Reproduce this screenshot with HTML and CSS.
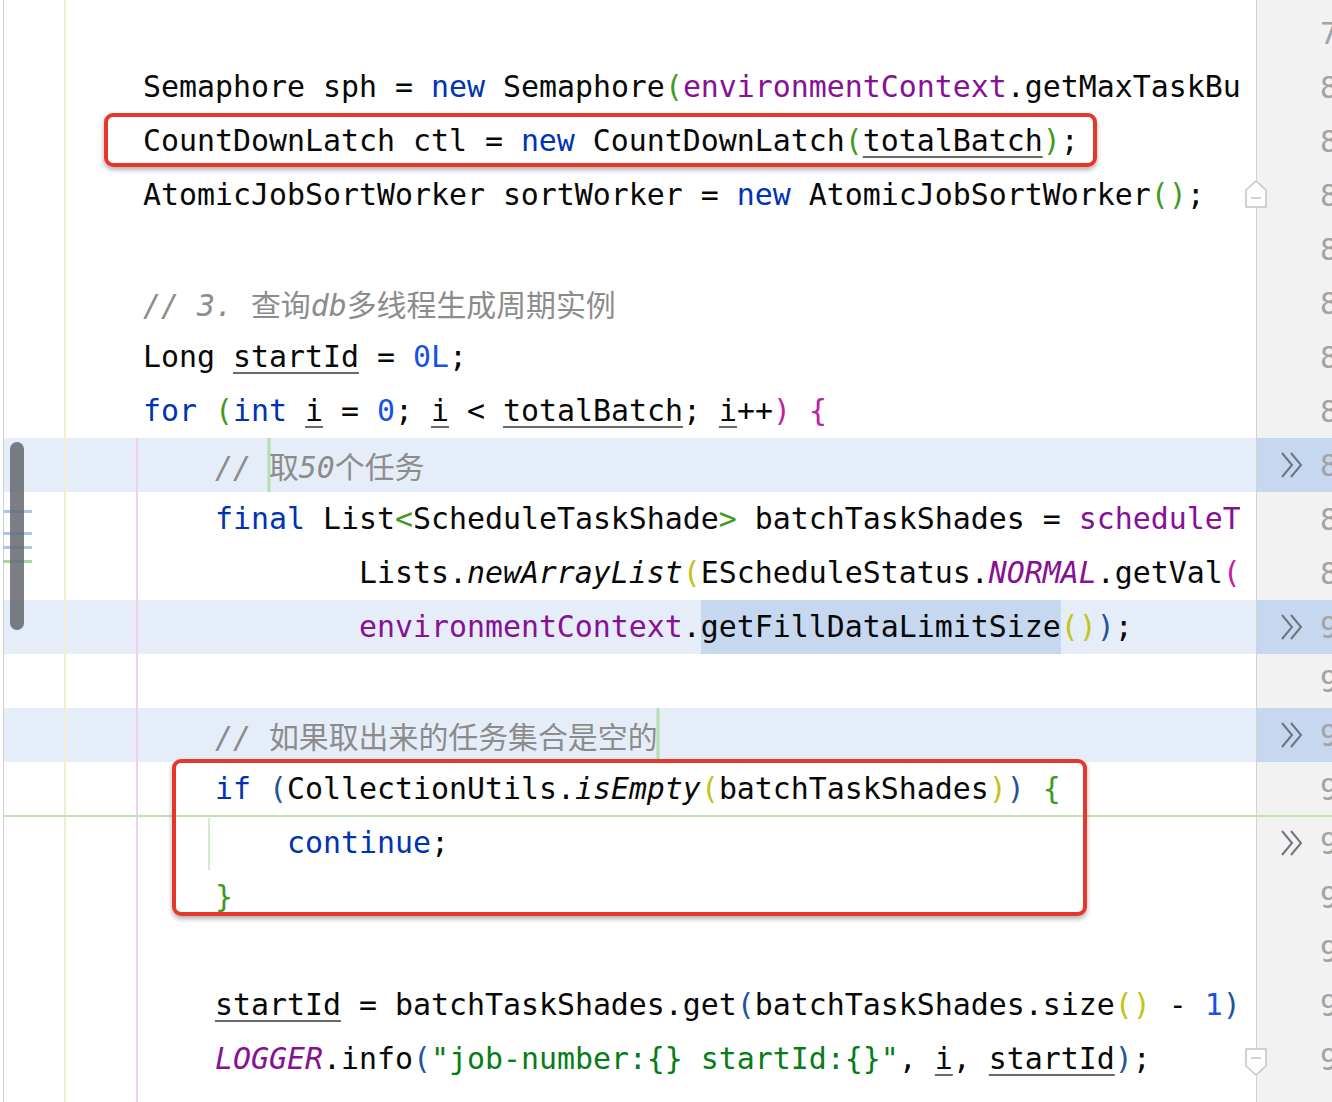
FILE: index.html
```html
<!DOCTYPE html>
<html lang="zh-CN">
<head>
<meta charset="utf-8">
<title>Editor</title>
<link rel="stylesheet" href="styles.css">
</head>
<body>
<div class="editor">
  <div class="code">
    <div class="line"><div class="txt"> </div></div>
    <div class="line"><div class="txt">        Semaphore sph = <span class="kw">new</span> Semaphore<span class="g">(</span><span class="fld">environmentContext</span>.getMaxTaskBuildThread<span class="y">()</span><span class="g">)</span>;</div></div>
    <div class="line"><div class="txt">        CountDownLatch ctl = <span class="kw">new</span> CountDownLatch<span class="g">(</span><span class="u">totalBatch</span><span class="g">)</span>;</div></div>
    <div class="line"><div class="txt">        AtomicJobSortWorker sortWorker = <span class="kw">new</span> AtomicJobSortWorker<span class="g">()</span>;</div></div>
    <div class="line"><div class="txt"> </div></div>
    <div class="line"><div class="txt">        <span class="cm">// 3. <span class="cjk">查询</span>db<span class="cjk">多线程生成周期实例</span></span></div></div>
    <div class="line"><div class="txt">        Long <span class="u">startId</span> = <span class="num">0L</span>;</div></div>
    <div class="line"><div class="txt">        <span class="kw">for</span> <span class="g">(</span><span class="kw">int</span> <span class="u">i</span> = <span class="num">0</span>; <span class="u">i</span> &lt; <span class="u">totalBatch</span>; <span class="u">i</span>++<span class="m">)</span> <span class="m">{</span></div></div>
    <div class="line hl"><div class="txt">            <span class="cm">// <span class="caret"></span><span class="cjk">取</span>50<span class="cjk">个任务</span></span></div></div>
    <div class="line"><div class="txt">            <span class="kw">final</span> List<span class="g">&lt;</span>ScheduleTaskShade<span class="g">&gt;</span> batchTaskShades = <span class="fld">scheduleTaskShadeService</span>.listRunnableTask<span class="m">(</span><span class="u">startId</span>,</div></div>
    <div class="line"><div class="txt">                    Lists.<span class="it">newArrayList</span><span class="y">(</span>EScheduleStatus.<span class="fld it">NORMAL</span>.getVal<span class="m">()</span>, EScheduleStatus.<span class="fld it">FREEZE</span>.getVal<span class="m">()</span><span class="y">)</span>,</div></div>
    <div class="line hl"><div class="txt">                    <span class="fld">environmentContext</span>.<span class="sel">getFillDataLimitSize</span><span class="y">()</span><span class="b">)</span>;</div></div>
    <div class="line"><div class="txt"> </div></div>
    <div class="line hl"><div class="txt">            <span class="cm">// <span class="cjk">如果取出来的任务集合是空的</span></span><span class="caret"></span></div></div>
    <div class="line"><div class="txt">            <span class="kw">if</span> <span class="b">(</span>CollectionUtils.<span class="it">isEmpty</span><span class="y">(</span>batchTaskShades<span class="y">)</span><span class="b">)</span> <span class="g">{</span></div></div>
    <div class="line"><div class="txt">                <span class="kw">continue</span>;</div></div>
    <div class="line"><div class="txt">            <span class="g">}</span></div></div>
    <div class="line"><div class="txt"> </div></div>
    <div class="line"><div class="txt">            <span class="u">startId</span> = batchTaskShades.get<span class="b">(</span>batchTaskShades.size<span class="y">()</span> - <span class="num">1</span><span class="b">)</span>.getId();</div></div>
    <div class="line"><div class="txt">            <span class="fld it">LOGGER</span>.info<span class="b">(</span><span class="str">"job-number:{} startId:{}"</span>, <span class="u">i</span>, <span class="u">startId</span><span class="b">)</span>;</div></div>
    <div class="line"><div class="txt"> </div></div>
  </div>
  <div class="gutter">
    <div class="gl"><span class="chev"></span><span class="ln">79</span></div>
    <div class="gl"><span class="chev"></span><span class="ln">80</span></div>
    <div class="gl"><span class="chev"></span><span class="ln">81</span></div>
    <div class="gl"><span class="chev"></span><span class="ln">82</span></div>
    <div class="gl"><span class="chev"></span><span class="ln">83</span></div>
    <div class="gl"><span class="chev"></span><span class="ln">84</span></div>
    <div class="gl"><span class="chev"></span><span class="ln">85</span></div>
    <div class="gl"><span class="chev"></span><span class="ln">86</span></div>
    <div class="gl hl"><span class="chev"><svg viewBox="0 0 26 28" width="26" height="28"><path d="M3 2 L13 14 L3 26 M12 2 L22 14 L12 26" fill="none" stroke="#6f737a" stroke-width="2"/></svg></span><span class="ln">87</span></div>
    <div class="gl"><span class="chev"></span><span class="ln">88</span></div>
    <div class="gl"><span class="chev"></span><span class="ln">89</span></div>
    <div class="gl hl"><span class="chev"><svg viewBox="0 0 26 28" width="26" height="28"><path d="M3 2 L13 14 L3 26 M12 2 L22 14 L12 26" fill="none" stroke="#6f737a" stroke-width="2"/></svg></span><span class="ln">90</span></div>
    <div class="gl"><span class="chev"></span><span class="ln">91</span></div>
    <div class="gl hl"><span class="chev"><svg viewBox="0 0 26 28" width="26" height="28"><path d="M3 2 L13 14 L3 26 M12 2 L22 14 L12 26" fill="none" stroke="#6f737a" stroke-width="2"/></svg></span><span class="ln">92</span></div>
    <div class="gl"><span class="chev"></span><span class="ln">93</span></div>
    <div class="gl"><span class="chev"><svg viewBox="0 0 26 28" width="26" height="28"><path d="M3 2 L13 14 L3 26 M12 2 L22 14 L12 26" fill="none" stroke="#6f737a" stroke-width="2"/></svg></span><span class="ln">94</span></div>
    <div class="gl"><span class="chev"></span><span class="ln">95</span></div>
    <div class="gl"><span class="chev"></span><span class="ln">96</span></div>
    <div class="gl"><span class="chev"></span><span class="ln">97</span></div>
    <div class="gl"><span class="chev"></span><span class="ln">98</span></div>
    <div class="gl"><span class="chev"></span><span class="ln">99</span></div>
  </div>
</div>

<div class="guide guide-method"></div>
<div class="guide guide-for"></div>
<div class="guide guide-if"></div>
<div class="hline"></div>

<div class="marker mk1"></div>
<div class="marker mk2"></div>
<div class="marker mk3"></div>
<div class="marker mk4"></div>
<div class="thumb"></div>

<svg class="fold fold-top" viewBox="0 0 22 28" width="22" height="28"><path d="M1 10 L11 1 L21 10 L21 27 L1 27 Z" fill="#ffffff" stroke="#c4c4c4" stroke-width="1.5"/><path d="M6 18 H16" stroke="#c4c4c4" stroke-width="1.5"/></svg>
<svg class="fold fold-bottom" viewBox="0 0 22 28" width="22" height="28"><path d="M1 1 L21 1 L21 18 L11 27 L1 18 Z" fill="#ffffff" stroke="#c4c4c4" stroke-width="1.5"/><path d="M6 10 H16" stroke="#c4c4c4" stroke-width="1.5"/></svg>

<div class="redbox box1"></div>
<div class="redbox box2"></div>
</body>
</html>
```

FILE: styles.css
```css
html, body {
  margin: 0;
  padding: 0;
}
body {
  width: 1332px;
  height: 1102px;
  overflow: hidden;
  position: relative;
  background: #ffffff;
}
.editor {
  display: flex;
  height: 1102px;
}
.code {
  width: 1252px;
  margin-left: 3px;
  border-left: 1px solid #cfcfcf;
  padding-top: 6px;
  flex: none;
}
.line {
  height: 54px;
}
.line.hl {
  background: #e5edf9;
}
.txt {
  margin-left: -5px;
  width: 1241px;
  height: 54px;
  overflow: hidden;
  white-space: pre;
  font-family: "DejaVu Sans Mono", "Noto Sans CJK SC", monospace;
  font-size: 29.9px;
  line-height: 54px;
  color: #080808;
}
.kw { color: #0033b3; }
.fld { color: #871094; }
.it { font-style: italic; }
.num { color: #1750eb; }
.str { color: #067d17; }
.cm { color: #8c8c8c; font-style: italic; }
.cjk { font-style: normal; font-family: "Noto Sans CJK SC", sans-serif; }
.g { color: #3e9b22; }
.y { color: #c3c31a; }
.m { color: #c01ea2; }
.b { color: #1d55a2; }
.u {
  text-decoration: underline;
  text-decoration-color: #6a6a6a;
  text-decoration-thickness: 2px;
  text-underline-offset: 5px;
}
.sel {
  display: inline-block;
  height: 54px;
  line-height: 54px;
  vertical-align: top;
  background: #c5d8f0;
}
.caret {
  display: inline-block;
  width: 0;
  height: 54px;
  vertical-align: top;
  box-shadow: 0 0 0 1.5px #b4dfae;
}

.gutter {
  flex: none;
  width: 75px;
  border-left: 1px solid #d2d2d2;
  background: #f2f2f2;
  padding-top: 6px;
  overflow: hidden;
}
.gl {
  height: 54px;
  display: flex;
  align-items: center;
}
.gl.hl {
  background: #c5d8f0;
}
.chev {
  width: 63px;
  height: 28px;
  padding-left: 22px;
  box-sizing: border-box;
  flex: none;
}
.chev svg {
  display: block;
}
.ln {
  font-family: "DejaVu Sans Mono", monospace;
  font-size: 29.9px;
  color: #a3a3a3;
  white-space: pre;
}

.guide {
  position: absolute;
  width: 2px;
}
.guide-method {
  left: 64px;
  top: 0;
  height: 1102px;
  background: #efefcd;
}
.guide-for {
  left: 136px;
  top: 438px;
  height: 664px;
  background: #f1cdee;
}
.guide-if {
  left: 208px;
  top: 818px;
  height: 52px;
  background: #d5ebd0;
}
.hline {
  position: absolute;
  left: 3px;
  top: 815px;
  width: 1329px;
  height: 2px;
  background: #bfe3b7;
}
.marker {
  position: absolute;
  left: 3px;
  width: 29px;
  height: 3px;
}
.mk1 { top: 510px; background: #a9c6ec; }
.mk2 { top: 532px; background: #a9c6ec; }
.mk3 { top: 546px; background: #a9c6ec; }
.mk4 { top: 560px; background: #a6d7a0; }
.thumb {
  position: absolute;
  left: 10px;
  top: 442px;
  width: 14px;
  height: 188px;
  border-radius: 7px;
  background: rgba(100, 103, 110, 0.85);
}
.fold {
  position: absolute;
  left: 1245px;
}
.fold-top { top: 180px; }
.fold-bottom { top: 1048px; }
.redbox {
  position: absolute;
  box-sizing: border-box;
  border: 4px solid #e5382c;
  border-radius: 9px;
  box-shadow: 0 3px 5px rgba(0, 0, 0, 0.3);
}
.box1 {
  left: 104px;
  top: 113px;
  width: 993px;
  height: 54px;
}
.box2 {
  left: 172px;
  top: 759px;
  width: 915px;
  height: 157px;
}
```
